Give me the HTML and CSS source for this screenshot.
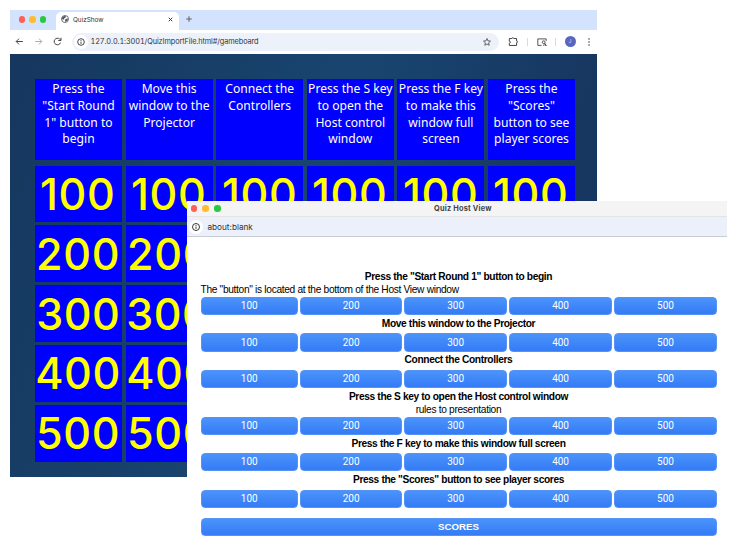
FILE: index.html
```html
<!DOCTYPE html>
<html lang="en">
<head>
<meta charset="utf-8">
<title>QuizShow</title>
<link rel="stylesheet" href="styles.css">
</head>
<body>
<main class="desktop">
  <section class="browser">
    <header class="tabs">
      <div class="lights"><i class="red"></i><i class="amber"></i><i class="green"></i></div>
      <div class="tab">
        <svg class="globe" viewBox="0 0 16 16"><circle cx="8" cy="8" r="7" fill="#fff" stroke="#53585e" stroke-width="1.7"/><path d="M2 5l4-3 4 .5-1 3-3 1 1 2-3 1-2-2zM9 8l5-1-1 4-4 3-1-3z" fill="#53585e"/></svg>
        <span>QuizShow</span>
        <svg class="close" viewBox="0 0 8 8"><path d="M2 2l4 4m0-4l-4 4" stroke="#333" stroke-width="1.1"/></svg>
      </div>
      <svg class="plus" viewBox="0 0 8 8"><path d="M4 1.200v5.600M1.200 4h5.600" stroke="#555" stroke-width=".9"/></svg>
    </header>
    <div class="toolbar">
      <svg class="nav" viewBox="0 0 10 10"><path d="M8 5H2M4.600 2.400L2 5l2.600 2.600" fill="none" stroke="#444" stroke-width=".9"/></svg>
      <svg class="nav" viewBox="0 0 10 10"><path d="M2 5h6M5.400 2.400L8 5 5.400 7.600" fill="none" stroke="#aaa" stroke-width=".9"/></svg>
      <svg class="nav" viewBox="0 0 10 10"><path d="M7.800 6a3 3 0 1 1-.8-3.200L8 3.800M8.200 1.600v2.500H5.700" fill="none" stroke="#444" stroke-width=".9"/></svg>
      <div class="address">
        <span class="info"><svg viewBox="0 0 10 10"><circle cx="5" cy="5" r="3.300" fill="none" stroke="#333" stroke-width=".9"/><path d="M5 4.600v2.200M5 3v.9" stroke="#333" stroke-width=".9"/></svg></span>
        <span class="url">127.0.0.1:3001/QuizImportFile.html#/gameboard</span>
        <svg class="star" viewBox="0 0 10 10"><path d="M5 1.500l1 2.400 2.500.2-1.900 1.700.6 2.500L5 7 2.800 8.300l.6-2.500-1.900-1.700L4 3.900z" fill="none" stroke="#444" stroke-width=".8"/></svg>
      </div>
      <svg class="puzzle" viewBox="0 0 10 10"><path d="M1.200 2.300h2.300a.8.600 0 0 1 1.800 0h2.500v2.200a.8.800 0 0 1 0 1.600v2.500H1.200V6.600a.9.900 0 0 0 0-1.900z" fill="none" stroke="#444" stroke-width=".9"/></svg>
      <i class="sep"></i>
      <svg class="lens" viewBox="0 0 10 10"><path d="M4.500 8.400H.8V1.900h8.400v2M6 8.500q1-1.500 3 0" fill="none" stroke="#444" stroke-width=".9"/><circle cx="6.700" cy="5.200" r="1.400" fill="none" stroke="#444" stroke-width=".9"/><path d="M7.700 6.200l1.800 2.500" stroke="#444"/></svg>
      <i class="sep second"></i>
      <span class="avatar">J</span>
      <svg class="dots" viewBox="0 0 4 10"><circle cx="2" cy="2" r=".8"/><circle cx="2" cy="5" r=".8"/><circle cx="2" cy="8" r=".8"/></svg>
    </div>
    <div class="board">
      <div class="row topics">
        <div>Press the<br>"Start Round<br>1" button to<br>begin</div><div>Move this<br>window to the<br>Projector</div><div>Connect the<br>Controllers</div><div>Press the S key<br>to open the<br>Host control<br>window</div><div>Press the F key<br>to make this<br>window full<br>screen</div><div>Press the<br>"Scores"<br>button to see<br>player scores</div>
      </div>
      <div class="row values"><div><b>100</b></div><div><b>100</b></div><div><b>100</b></div><div><b>100</b></div><div><b>100</b></div><div><b>100</b></div></div>
      <div class="row values"><div><b>200</b></div><div><b>200</b></div><div></div><div></div><div></div><div></div></div>
      <div class="row values"><div><b>300</b></div><div><b>300</b></div><div></div><div></div><div></div><div></div></div>
      <div class="row values"><div><b>400</b></div><div><b>400</b></div><div></div><div></div><div></div><div></div></div>
      <div class="row values"><div><b>500</b></div><div><b>500</b></div><div></div><div></div><div></div><div></div></div>
    </div>
  </section>

  <section class="host">
    <header class="titlebar">
      <div class="lights"><i class="red"></i><i class="amber"></i><i class="green"></i></div>
      <span class="title">Quiz Host View</span>
    </header>
    <div class="location">
      <span class="info"><svg viewBox="0 0 10 10"><circle cx="5" cy="5" r="3.500" fill="none" stroke="#222" stroke-width=".9"/><path d="M5 4.600v2.200M5 3v.9" stroke="#222" stroke-width=".9"/></svg></span>
      <span>about:blank</span>
    </div>
    <div class="content">
      <div class="group noted"><h2>Press the "Start Round 1" button to begin</h2><p class="left">The "button" is located at the bottom of the Host View window</p>
        <div class="buttons"><button>100</button><button>200</button><button>300</button><button>400</button><button>500</button></div></div>
      <div class="group first"><h2>Move this window to the Projector</h2>
        <div class="buttons"><button>100</button><button>200</button><button>300</button><button>400</button><button>500</button></div></div>
      <div class="group"><h2>Connect the Controllers</h2>
        <div class="buttons"><button>100</button><button>200</button><button>300</button><button>400</button><button>500</button></div></div>
      <div class="group noted"><h2>Press the S key to open the Host control window</h2><p>rules to presentation</p>
        <div class="buttons"><button>100</button><button>200</button><button>300</button><button>400</button><button>500</button></div></div>
      <div class="group"><h2>Press the F key to make this window full screen</h2>
        <div class="buttons"><button>100</button><button>200</button><button>300</button><button>400</button><button>500</button></div></div>
      <div class="group"><h2>Press the "Scores" button to see player scores</h2>
        <div class="buttons"><button>100</button><button>200</button><button>300</button><button>400</button><button>500</button></div></div>
      <button class="scores">SCORES</button>
    </div>
  </section>
</main>
</body>
</html>
```
FILE: styles.css
```css
* { box-sizing: border-box; }
body { margin: 0; background: #fff; font-family: Inter, "Liberation Sans", sans-serif; }
svg { display: block; flex: none; }
.desktop { position: relative; width: 736px; height: 559px; overflow: hidden; padding: 10px; }
.browser { width: 587px; height: 466.500px; }
.tabs { display: flex; align-items: center; height: 19.500px; background: #d3e3fd; }
.lights { display: flex; flex: none; gap: 4px; }
.lights i { width: 6.600px; height: 6.600px; border-radius: 50%; }
.red { background: #fe5f57; }
.amber { background: #febc2e; }
.green { background: #28c840; }
.tabs .lights { margin-left: 8.700px; }
.tab { display: flex; align-items: center; width: 123px; height: 17.500px; margin: 2px 0 0 9.500px; padding: 0 5px; border-radius: 5px 5px 0 0; background: #fff; font-size: 6.400px; color: #333; }
.tabs .lights, .plus { margin-top: -1px; }
.globe { width: 8px; height: 8px; margin-right: 4px; }
.globe, .close { margin-top: -3px; }
.tab span { margin-top: -2px; }
.close { width: 7px; height: 7px; margin-left: auto; }
.plus { width: 8px; height: 8px; margin-left: 6.500px; }
.toolbar { display: flex; align-items: center; height: 24.500px; padding-left: 4px; background: #fff; }
.nav { width: 11px; height: 11px; margin-right: 8px; }
.address { display: flex; align-items: center; width: 427px; height: 18px; margin-left: 1px; padding: 0 7px 0 2px; border-radius: 9px; background: #edf1fa; color: #333; }
.info { display: flex; align-items: center; justify-content: center; width: 14px; height: 14px; flex: none; border-radius: 50%; background: #fff; }
.info svg { width: 10px; height: 10px; }
.url { margin-left: 2.500px; white-space: nowrap; font-size: 7.350px; letter-spacing: -.1px; font-variant-numeric: tabular-nums; }
.star { width: 10px; height: 10px; margin-left: auto; }
.puzzle { width: 11px; height: 11px; margin-left: 9px; }
.sep { width: 1px; height: 8px; margin-left: 8px; background: #c9dcfa; }
.lens { width: 10px; height: 10px; margin-left: 9px; }
.second { margin-left: 8px; }
.avatar { width: 11px; height: 11px; margin-left: 8.500px; border-radius: 50%; background: #5866bd; color: #dce0ff; font-size: 5px; line-height: 11px; text-align: center; }
.dots { width: 4px; height: 10px; margin-left: 11px; fill: #444; }
.board { display: flex; flex-direction: column; gap: 3px; height: 422.500px; padding: 25px 22px 0 25px; background: linear-gradient(110deg, #16375e, #18456f 48%, #173761 80%, #16365d); }
.row { display: grid; grid-template-columns: repeat(6, 87px); column-gap: 3.600px; flex: none; }
.row > div { background: #00f; }
.topics { height: 81px; margin-bottom: 2.700px; color: #fff; font: 12.100px/16.800px "Noto Sans", sans-serif; text-align: center; white-space: nowrap; }
.topics > div { padding-top: 2px; }
.values { height: 56.800px; }
.values > div { display: flex; align-items: center; justify-content: center; }
.values b { color: #ff0; font: 500 43.500px/56px Inter, sans-serif; letter-spacing: .6px; transform: translate(-.3px, -.5px) scaleX(.99); }
.host { position: absolute; left: 187px; top: 201px; width: 540px; height: 349px; background: #fff; }
.titlebar { display: flex; align-items: center; height: 16px; padding-left: 3.500px; background: #f4f4f4; border-bottom: 1px solid #e4e4e6; }
.titlebar .lights { gap: 5.200px; }
.title { flex: 1; padding-right: 22px; text-align: center; font-size: 7.400px; font-weight: 700; letter-spacing: .18px; color: #454545; }
.location { display: flex; align-items: center; gap: 5px; height: 20px; padding-left: 1.500px; background: #ebf0fa; border-bottom: 1px solid #c9ccd3; font-size: 8.200px; color: #333; }
.content { padding: 34px 10.500px 0 13.500px; font-family: "Liberation Sans", Arial, sans-serif; font-size: 10.200px; letter-spacing: -.32px; color: #000; }
.group { height: 36.600px; }
.first { height: 36.400px; }
.noted { height: 46.800px; }
.group h2 { margin: 0; font-size: 10.200px; line-height: 12px; text-align: center; letter-spacing: -.36px; }
.group p { margin: 1px 0 0; line-height: 12px; text-align: center; }
.group .left { text-align: left; }
.buttons { display: grid; grid-template-columns: 97.500px 102px 102.500px 103px 102.500px; gap: 2.200px; margin-top: 3.700px; }
.noted .buttons { margin-top: 1.200px; }
button { height: 18.200px; padding: 0; border: 1px solid #5594f6; border-radius: 4px; background: linear-gradient(#4b93fa, #347bf6); color: #fff; font: 400 10px/16px Roboto, sans-serif; }
.scores { display: block; width: 516px; margin-top: 7.500px; font: 700 9.700px/16px "Liberation Sans", sans-serif; }
```
